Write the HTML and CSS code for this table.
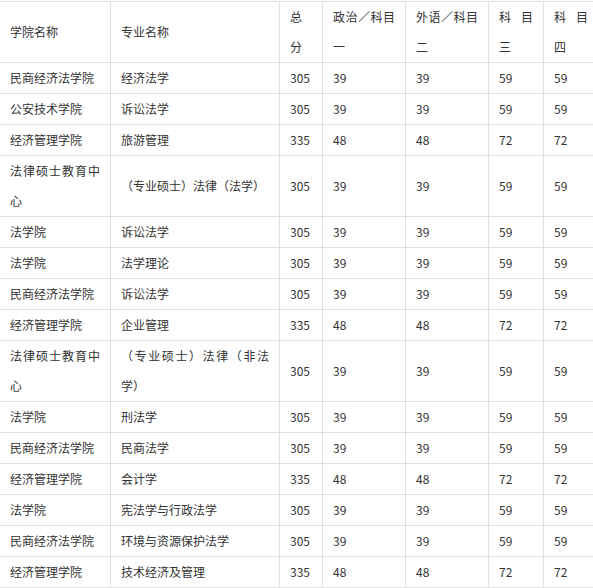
FILE: index.html
```html
<!DOCTYPE html>
<html lang="zh-CN">
<head>
<meta charset="utf-8">
<title>分数线</title>
<link rel="stylesheet" href="styles.css">
</head>
<body>
<table class="score-table">
  <thead>
    <tr>
      <th class="c1">学院名称</th>
      <th class="c2">专业名称</th>
      <th class="c3">总分</th>
      <th class="c4">政治／科目一</th>
      <th class="c5">外语／科目二</th>
      <th class="c6">科目三</th>
      <th class="c7">科目四</th>
    </tr>
  </thead>
  <tbody>
    <tr><td>民商经济法学院</td><td>经济法学</td><td>305</td><td>39</td><td>39</td><td>59</td><td>59</td></tr>
    <tr><td>公安技术学院</td><td>诉讼法学</td><td>305</td><td>39</td><td>39</td><td>59</td><td>59</td></tr>
    <tr><td>经济管理学院</td><td>旅游管理</td><td>335</td><td>48</td><td>48</td><td>72</td><td>72</td></tr>
    <tr><td>法律硕士教育中心</td><td>（专业硕士）法律（法学）</td><td>305</td><td>39</td><td>39</td><td>59</td><td>59</td></tr>
    <tr><td>法学院</td><td>诉讼法学</td><td>305</td><td>39</td><td>39</td><td>59</td><td>59</td></tr>
    <tr><td>法学院</td><td>法学理论</td><td>305</td><td>39</td><td>39</td><td>59</td><td>59</td></tr>
    <tr><td>民商经济法学院</td><td>诉讼法学</td><td>305</td><td>39</td><td>39</td><td>59</td><td>59</td></tr>
    <tr><td>经济管理学院</td><td>企业管理</td><td>335</td><td>48</td><td>48</td><td>72</td><td>72</td></tr>
    <tr><td>法律硕士教育中心</td><td>（专业硕士）法律（非法学）</td><td>305</td><td>39</td><td>39</td><td>59</td><td>59</td></tr>
    <tr><td>法学院</td><td>刑法学</td><td>305</td><td>39</td><td>39</td><td>59</td><td>59</td></tr>
    <tr><td>民商经济法学院</td><td>民商法学</td><td>305</td><td>39</td><td>39</td><td>59</td><td>59</td></tr>
    <tr><td>经济管理学院</td><td>会计学</td><td>335</td><td>48</td><td>48</td><td>72</td><td>72</td></tr>
    <tr><td>法学院</td><td>宪法学与行政法学</td><td>305</td><td>39</td><td>39</td><td>59</td><td>59</td></tr>
    <tr><td>民商经济法学院</td><td>环境与资源保护法学</td><td>305</td><td>39</td><td>39</td><td>59</td><td>59</td></tr>
    <tr><td>经济管理学院</td><td>技术经济及管理</td><td>335</td><td>48</td><td>48</td><td>72</td><td>72</td></tr>
  </tbody>
</table>
</body>
</html>
```

FILE: styles.css
```css
html, body {
  margin: 0;
  padding: 0;
  background: #fff;
}

body {
  font-family: "Microsoft YaHei", "Noto Sans CJK SC", sans-serif;
  font-size: 12px;
  color: #333;
}

.score-table {
  margin: 1px 0 0 -1px;
  width: 600px;
  table-layout: fixed;
  border-collapse: separate;
  border-spacing: 0;
  border-top: 1px solid #e0e0e0;
  border-left: 1px solid #e0e0e0;
}

.score-table th,
.score-table td {
  box-sizing: border-box;
  padding: 0 10px;
  line-height: 30px;
  font-weight: normal;
  text-align: justify;
  vertical-align: middle;
  border-right: 1px solid #e0e0e0;
  border-bottom: 1px solid #e0e0e0;
  word-break: normal;
}

.c1 { width: 111px; }
.c2 { width: 169px; }
.c3 { width: 43px; }
.c4 { width: 83px; }
.c5 { width: 83px; }
.c6 { width: 55px; }
.c7 { width: 55px; }
```
